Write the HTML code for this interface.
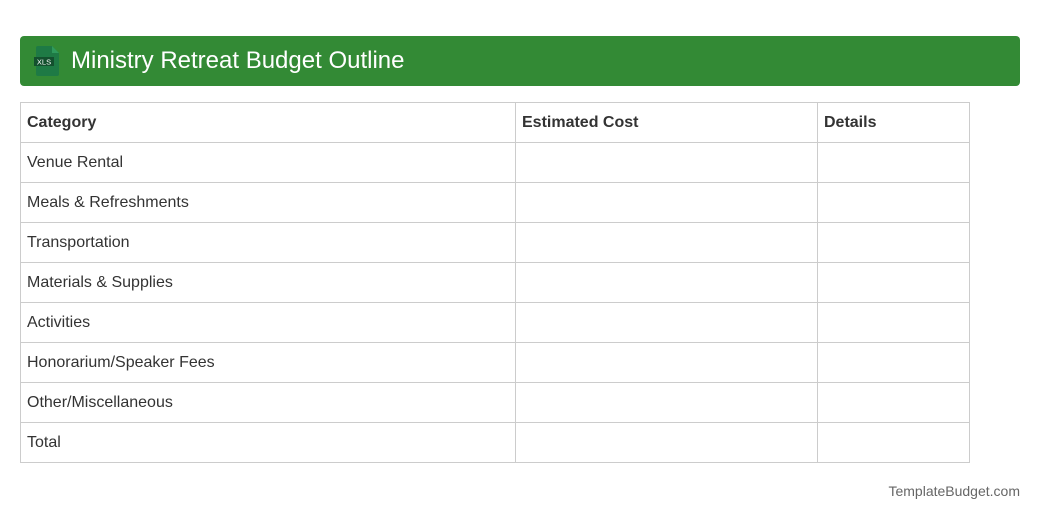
<!DOCTYPE html>
<html><head><meta charset="utf-8"><style>
body{margin:0;background:#fff;font-family:"Liberation Sans",Arial,sans-serif;width:1040px;height:520px;position:relative;overflow:hidden}
.hdr{position:absolute;left:20px;top:36px;width:1000px;height:50px;background:#338a35;border-radius:4px}
.hdr .t{position:absolute;left:51px;top:11px;color:#fff;font-size:24px;line-height:28px}
table{position:absolute;left:20px;top:102px;border-collapse:collapse;width:950px}
td{border:1px solid #ccc;height:39px;padding:0 0 0 6px;font-size:16px;color:#333}
th{border:1px solid #ccc;height:39px;padding:0 0 0 6px;font-size:16px;color:#333;text-align:left;font-weight:bold}
.f{position:absolute;right:20px;top:483px;font-size:14px;color:#666}
</style></head><body>
<div class="hdr">
<svg style="position:absolute;left:14px;top:10px" width="26" height="30" viewBox="0 0 26 30">
<path d="M4 0H18L25 7V28a2 2 0 0 1-2 2H4a2 2 0 0 1-2-2V2a2 2 0 0 1 2-2z" fill="#1e7a45"/>
<path d="M18 0V7H25z" fill="#2f9a5c"/>
<rect x="0" y="11" width="20" height="9" fill="#13502e"/>
<text x="10" y="18.5" font-size="7.5" fill="#fff" text-anchor="middle" font-family="Liberation Sans">XLS</text>
</svg>
<div class="t">Ministry Retreat Budget Outline</div></div>
<table>
<tr><th style="width:488px">Category</th><th style="width:295px">Estimated Cost</th><th>Details</th></tr>
<tr><td>Venue Rental</td><td></td><td></td></tr>
<tr><td>Meals &amp; Refreshments</td><td></td><td></td></tr>
<tr><td>Transportation</td><td></td><td></td></tr>
<tr><td>Materials &amp; Supplies</td><td></td><td></td></tr>
<tr><td>Activities</td><td></td><td></td></tr>
<tr><td>Honorarium/Speaker Fees</td><td></td><td></td></tr>
<tr><td>Other/Miscellaneous</td><td></td><td></td></tr>
<tr><td>Total</td><td></td><td></td></tr>
</table>
<div class="f">TemplateBudget.com</div>
</body></html>
